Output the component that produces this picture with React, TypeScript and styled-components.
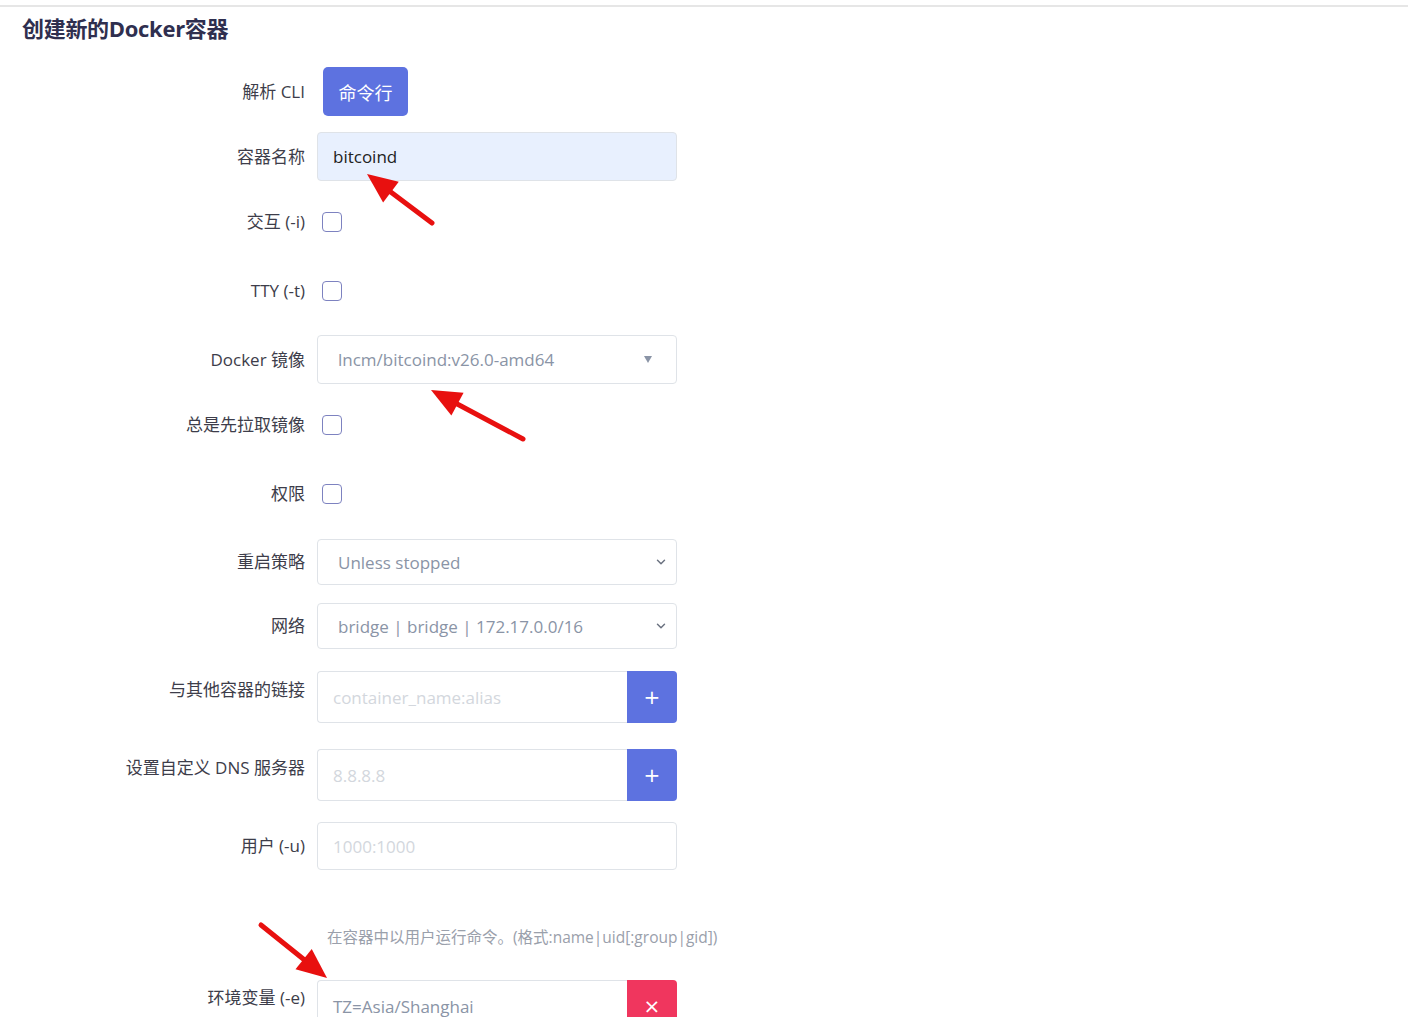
import React from "react";
import styled, { createGlobalStyle } from "styled-components";

const Global = createGlobalStyle`
  html, body { margin: 0; padding: 0; background: #ffffff; }
  body { font-family: "Open Sans", "Noto Sans CJK SC", sans-serif; }
  * { box-sizing: border-box; }
`;

const Page = styled.div`
  position: relative;
  width: 1410px;
  height: 1017px;
  overflow: hidden;
  background: #fff;
`;

const TopRule = styled.div`
  margin-top: 5px;
  height: 2px;
  width: 1408px;
  background: #e6e6e6;
`;

const Title = styled.h2`
  margin: 7px 0 0 22px;
  height: 28px;
  font-size: 22px;
  line-height: 28px;
  font-weight: 700;
  color: #2f2f4f;
  letter-spacing: -0.3px;
`;

const Row = styled.div<{ $mt: number; $h: number; $align?: string }>`
  display: flex;
  align-items: ${(p) => p.$align || "center"};
  margin-top: ${(p) => p.$mt}px;
  height: ${(p) => p.$h}px;
`;

const Label = styled.label<{ $pt?: number }>`
  width: 305px;
  flex: none;
  text-align: right;
  font-size: 17px;
  line-height: 24px;
  color: #3d3d4a;
  padding-top: ${(p) => p.$pt || 0}px;
  white-space: nowrap;
`;

const Control = styled.div<{ $ml?: number }>`
  margin-left: ${(p) => (p.$ml ?? 12)}px;
  width: ${(p) => 372 - (p.$ml ?? 12)}px;
  flex: none;
`;

const PrimaryButton = styled.button`
  height: 49px;
  width: 85px;
  border: none;
  border-radius: 5px;
  background: #5d72e0;
  color: #fff;
  font-family: "Noto Sans CJK SC", sans-serif;
  font-size: 18px;
  padding: 0;
`;

const TextInput = styled.div<{ $filled?: boolean; $h: number; $tone?: string }>`
  height: ${(p) => p.$h}px;
  border: 1px solid #dfe3e8;
  border-radius: 4px;
  background: ${(p) => (p.$filled ? "#e8f0fe" : "#fff")};
  display: flex;
  align-items: center;
  padding-left: 15px;
  font-size: 17px;
  color: ${(p) => p.$tone || "#222"};
`;

const SelectBox = styled.div<{ $h: number }>`
  height: ${(p) => p.$h}px;
  border: 1px solid #dfe3e8;
  border-radius: 4px;
  background: #fff;
  display: flex;
  align-items: center;
  justify-content: space-between;
  padding: 0 8px 0 20px;
  font-size: 17px;
  color: #8a94a6;
`;

const Caret = styled.span`
  width: 0;
  height: 0;
  border-left: 4px solid transparent;
  border-right: 4px solid transparent;
  border-top: 7px solid #8a94a6;
  margin-right: 16px;
`;

const Checkbox = styled.span`
  display: block;
  width: 20px;
  height: 20px;
  border: 1.5px solid #7d82c0;
  border-radius: 4px;
  background: #fff;
`;

const Group = styled.div<{ $h: number }>`
  display: flex;
  height: ${(p) => p.$h}px;
`;

const GroupInput = styled.div<{ $tone: string }>`
  flex: 1;
  border: 1px solid #dfe3e8;
  border-right: none;
  border-radius: 4px 0 0 4px;
  display: flex;
  align-items: center;
  padding-left: 15px;
  font-size: 17px;
  color: ${(p) => p.$tone};
`;

const GroupButton = styled.button<{ $bg: string }>`
  width: 50px;
  border: none;
  border-radius: 0 4px 4px 0;
  background: ${(p) => p.$bg};
  color: #fff;
  font-size: 20px;
  font-family: "DejaVu Sans", sans-serif;
  padding: 0;
  display: flex;
  align-items: center;
  justify-content: center;
`;

const Help = styled.div`
  margin: 57px 0 0 327px;
  height: 20px;
  font-size: 15.5px;
  line-height: 20px;
  color: #9aa0ab;
  white-space: nowrap;
`;

const Overlay = styled.svg`
  position: absolute;
  left: 0;
  top: 0;
  pointer-events: none;
`;

type Pt = [number, number];

function Arrow({ tail, tip }: { tail: Pt; tip: Pt }) {
  const dx = tip[0] - tail[0];
  const dy = tip[1] - tail[1];
  const len = Math.hypot(dx, dy);
  const ux = dx / len;
  const uy = dy / len;
  const hl = 30;
  const hw = 13;
  const bx = tip[0] - ux * hl;
  const by = tip[1] - uy * hl;
  const px = -uy;
  const py = ux;
  const pts = [
    `${tip[0]},${tip[1]}`,
    `${bx + px * hw},${by + py * hw}`,
    `${bx - px * hw},${by - py * hw}`,
  ].join(" ");
  return (
    <g>
      <line
        x1={tail[0]}
        y1={tail[1]}
        x2={bx + ux * 4}
        y2={by + uy * 4}
        stroke="#e8100f"
        strokeWidth={5}
        strokeLinecap="round"
      />
      <polygon points={pts} fill="#e8100f" />
    </g>
  );
}

function Chevron() {
  return (
    <svg width="14" height="14" viewBox="0 0 24 24" fill="none" stroke="#6b7280" strokeWidth="2.5" strokeLinecap="round" strokeLinejoin="round">
      <path d="m6 9 6 6 6-6" />
    </svg>
  );
}

export default function App() {
  return (
    <>
      <Global />
      <Page>
        <TopRule />
        <Title>创建新的Docker容器</Title>

        <Row $mt={25} $h={49}>
          <Label>解析 CLI</Label>
          <Control $ml={18}>
            <PrimaryButton>命令行</PrimaryButton>
          </Control>
        </Row>

        <Row $mt={16} $h={49}>
          <Label>容器名称</Label>
          <Control>
            <TextInput $filled $h={49}>bitcoind</TextInput>
          </Control>
        </Row>

        <Row $mt={31} $h={20}>
          <Label>交互 (-i)</Label>
          <Control $ml={17}>
            <Checkbox />
          </Control>
        </Row>

        <Row $mt={49} $h={20}>
          <Label>TTY (-t)</Label>
          <Control $ml={17}>
            <Checkbox />
          </Control>
        </Row>

        <Row $mt={34} $h={49}>
          <Label>Docker 镜像</Label>
          <Control>
            <SelectBox $h={49}>
              <span>lncm/bitcoind:v26.0-amd64</span>
              <Caret />
            </SelectBox>
          </Control>
        </Row>

        <Row $mt={31} $h={20}>
          <Label>总是先拉取镜像</Label>
          <Control $ml={17}>
            <Checkbox />
          </Control>
        </Row>

        <Row $mt={49} $h={20}>
          <Label>权限</Label>
          <Control $ml={17}>
            <Checkbox />
          </Control>
        </Row>

        <Row $mt={35} $h={46}>
          <Label>重启策略</Label>
          <Control>
            <SelectBox $h={46}>
              <span>Unless stopped</span>
              <Chevron />
            </SelectBox>
          </Control>
        </Row>

        <Row $mt={18} $h={46}>
          <Label>网络</Label>
          <Control>
            <SelectBox $h={46}>
              <span>bridge | bridge | 172.17.0.0/16</span>
              <Chevron />
            </SelectBox>
          </Control>
        </Row>

        <Row $mt={22} $h={52} $align="flex-start">
          <Label $pt={7}>与其他容器的链接</Label>
          <Control>
            <Group $h={52}>
              <GroupInput $tone="#d3d7dd">container_name:alias</GroupInput>
              <GroupButton $bg="#5d72e0">+</GroupButton>
            </Group>
          </Control>
        </Row>

        <Row $mt={26} $h={52} $align="flex-start">
          <Label $pt={7}>设置自定义 DNS 服务器</Label>
          <Control>
            <Group $h={52}>
              <GroupInput $tone="#d3d7dd">8.8.8.8</GroupInput>
              <GroupButton $bg="#5d72e0">+</GroupButton>
            </Group>
          </Control>
        </Row>

        <Row $mt={21} $h={48}>
          <Label>用户 (-u)</Label>
          <Control>
            <TextInput $h={48} $tone="#d3d7dd">1000:1000</TextInput>
          </Control>
        </Row>

        <Help>在容器中以用户运行命令。(格式:name|uid[:group|gid])</Help>

        <Row $mt={33} $h={52} $align="flex-start">
          <Label $pt={6}>环境变量 (-e)</Label>
          <Control>
            <Group $h={52}>
              <GroupInput $tone="#8a94a6">TZ=Asia/Shanghai</GroupInput>
              <GroupButton $bg="#f0365e">×</GroupButton>
            </Group>
          </Control>
        </Row>

        <Overlay width={1410} height={1017} viewBox="0 0 1410 1017">
          <Arrow tail={[432, 223]} tip={[367, 174]} />
          <Arrow tail={[523, 439]} tip={[431, 390]} />
          <Arrow tail={[261, 925]} tip={[327, 978]} />
        </Overlay>
      </Page>
    </>
  );
}
